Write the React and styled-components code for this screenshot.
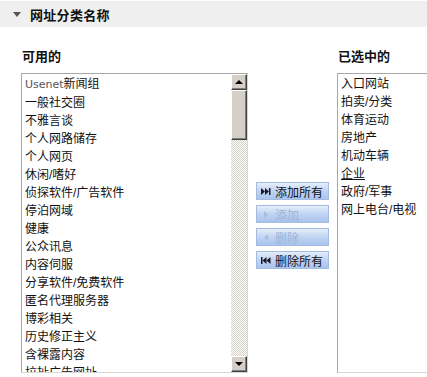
import React from 'react'
import styled, { createGlobalStyle } from 'styled-components'

const GlobalStyle = createGlobalStyle`
  html, body {
    margin: 0;
    padding: 0;
    background: #fff;
    overflow: hidden;
  }
  body {
    font-family: "Liberation Sans", "Noto Sans CJK SC", sans-serif;
    color: #000;
  }
`

const Page = styled.div`
  width: 427px;
  height: 377px;
  overflow: hidden;
`

const HeaderBar = styled.div`
  height: 26px;
  margin-top: 1px;
  background: #efefef;
  display: flex;
  align-items: center;
  padding-left: 13px;
  gap: 9px;
`

const Caret = styled.span`
  width: 0;
  height: 0;
  border-left: 4px solid transparent;
  border-right: 4px solid transparent;
  border-top: 5px solid #555;
`

const HeaderTitle = styled.div`
  font-size: 13px;
  font-weight: bold;
  color: #111;
  letter-spacing: 0.3px;
`

const Body = styled.div`
  display: flex;
  align-items: flex-start;
  padding: 21px 0 0 21px;
  gap: 8px;
  width: 700px;
`

const Column = styled.div`
  display: flex;
  flex-direction: column;
  gap: 7px;
  width: ${props => props.width}px;
  flex: none;
`

const Label = styled.div`
  font-size: 13px;
  font-weight: bold;
  line-height: 18px;
  padding-left: 1px;
  color: #111;
`

const ListBox = styled.div`
  height: 300px;
  border: 1px solid #a8a8a8;
  border-right-color: #d8d8d8;
  border-bottom-color: #d8d8d8;
  box-sizing: border-box;
  display: flex;
  overflow: hidden;
  background: #fff;
`

const Items = styled.div`
  flex: 1;
  overflow: hidden;
  padding: 1px 0 0 3px;
`

const Item = styled.div`
  font-size: 12px;
  line-height: 18px;
  white-space: nowrap;
  color: #111;
  text-decoration: ${props => (props.focused ? 'underline' : 'none')};
`

const Latin = styled.span`
  color: #555;
  font-family: "DejaVu Sans", sans-serif;
  font-size: 11px;
`

const ScrollBar = styled.div`
  width: 16px;
  flex: none;
  display: flex;
  flex-direction: column;
  background-color: #fff;
  background-image: repeating-conic-gradient(#d4d0c8 0 25%, #fff 0 50%);
  background-size: 2px 2px;
`

const ScrollButton = styled.div`
  height: 16px;
  box-sizing: border-box;
  background: #d4d0c8;
  border: 1px solid;
  border-color: #fff #404040 #404040 #fff;
  box-shadow: inset -1px -1px 0 #808080;
  display: flex;
  align-items: center;
  justify-content: center;
`

const Thumb = styled(ScrollButton)`
  height: 50px;
`

const Spacer = styled.div`
  flex: 1;
`

const Arrow = styled.span`
  width: 0;
  height: 0;
  border-left: 4px solid transparent;
  border-right: 4px solid transparent;
  ${props =>
    props.up
      ? 'border-bottom: 4px solid #000;'
      : 'border-top: 4px solid #000;'}
`

const ButtonStack = styled.div`
  display: flex;
  flex-direction: column;
  gap: 5px;
  width: 73px;
  flex: none;
  margin-top: 134px;
`

const MoveButton = styled.div`
  height: 18px;
  box-sizing: border-box;
  border: 1px solid #a3bbe0;
  background: linear-gradient(#e6eefa 0%, #c3d6f3 45%, #a9c4ee 100%);
  display: flex;
  align-items: center;
  gap: 4px;
  padding-left: 4px;
  font-size: 12px;
  color: ${props => (props.disabled ? '#9fb3d3' : '#111')};
  white-space: nowrap;
`

const Glyph = ({ kind, color }) => {
  const shapes = {
    addAll: (
      <>
        <polygon points="0,0 4,3.5 0,7" />
        <polygon points="4,0 8,3.5 4,7" />
        <rect x="8" y="0" width="1.5" height="7" />
      </>
    ),
    add: <polygon points="3,0 7,3.5 3,7" />,
    remove: <polygon points="7,0 3,3.5 7,7" />,
    removeAll: (
      <>
        <rect x="0" y="0" width="1.5" height="7" />
        <polygon points="5.5,0 1.5,3.5 5.5,7" />
        <polygon points="9.5,0 5.5,3.5 9.5,7" />
      </>
    )
  }
  return (
    <svg width="10" height="7" viewBox="0 0 10 7" fill={color}>
      {shapes[kind]}
    </svg>
  )
}

const available = [
  '一般社交圈',
  '不雅言谈',
  '个人网路储存',
  '个人网页',
  '休闲/嗜好',
  '侦探软件/广告软件',
  '停泊网域',
  '健康',
  '公众讯息',
  '内容伺服',
  '分享软件/免费软件',
  '匿名代理服务器',
  '博彩相关',
  '历史修正主义',
  '含裸露内容',
  '拉扯广告网址'
]

const selected = [
  '入口网站',
  '拍卖/分类',
  '体育运动',
  '房地产',
  '机动车辆',
  '企业',
  '政府/军事',
  '网上电台/电视'
]

const buttons = [
  { kind: 'addAll', label: '添加所有' },
  { kind: 'add', label: '添加', disabled: true },
  { kind: 'remove', label: '删除', disabled: true },
  { kind: 'removeAll', label: '删除所有' }
]

export default function App() {
  return (
    <Page>
      <GlobalStyle />
      <HeaderBar>
        <Caret />
        <HeaderTitle>网址分类名称</HeaderTitle>
      </HeaderBar>
      <Body>
        <Column width={227}>
          <Label>可用的</Label>
          <ListBox>
            <Items>
              <Item>
                <Latin>Usenet</Latin>新闻组
              </Item>
              {available.map(name => (
                <Item key={name}>{name}</Item>
              ))}
            </Items>
            <ScrollBar>
              <ScrollButton>
                <Arrow up />
              </ScrollButton>
              <Thumb />
              <Spacer />
              <ScrollButton>
                <Arrow />
              </ScrollButton>
            </ScrollBar>
          </ListBox>
        </Column>
        <ButtonStack>
          {buttons.map(b => (
            <MoveButton key={b.kind} disabled={b.disabled}>
              <Glyph
                kind={b.kind}
                color={b.disabled ? '#a9bde0' : '#1a1a2a'}
              />
              {b.label}
            </MoveButton>
          ))}
        </ButtonStack>
        <Column width={227}>
          <Label>已选中的</Label>
          <ListBox>
            <Items>
              {selected.map(name => (
                <Item key={name} focused={name === '企业'}>
                  {name}
                </Item>
              ))}
            </Items>
          </ListBox>
        </Column>
      </Body>
    </Page>
  )
}
